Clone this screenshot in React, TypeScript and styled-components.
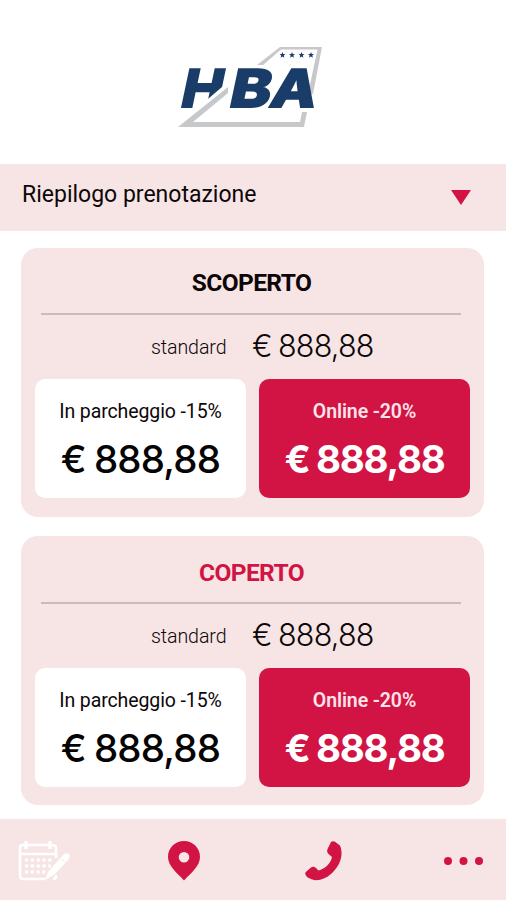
import React from 'react';
import styled, { createGlobalStyle } from 'styled-components';

const red = '#d11443';
const blush = '#f7e5e5';

const GlobalStyle = createGlobalStyle`
  * { box-sizing: border-box; }
  body { margin: 0; background: #fff; font-family: Roboto, "Noto Sans", sans-serif; color: #0d0709; }
  button { border: 0; padding: 0; background: none; font: inherit; color: inherit; }
`;

const Screen = styled.div`
  width: 506px;
  height: 900px;
  display: flex;
  flex-direction: column;
  overflow: hidden;
`;

const Header = styled.header`
  height: 164px;
  flex: none;
  padding: 40px 0 0 170px;
  svg { display: block; }
`;

const Summary = styled.button`
  height: 67px;
  flex: none;
  display: flex;
  justify-content: space-between;
  align-items: flex-start;
  padding: 15px 35px 0 22px;
  background: ${blush};
  svg { margin-top: 11px; }
`;

const SummaryText = styled.span`
  font-size: 23px;
  line-height: 31px;
  white-space: nowrap;
`;

const Cards = styled.main`
  flex: 1;
  display: flex;
  flex-direction: column;
  gap: 19px;
  padding: 17px 22px 0 21px;
`;

const Card = styled.section`
  height: 269px;
  padding: 0 14px;
  border-radius: 17px;
  background: ${blush};
`;

const Title = styled.h2<{ $accent?: boolean }>`
  margin: 0 9px 0 6px;
  height: ${(p) => (p.$accent ? 68 : 67)}px;
  padding: ${(p) => (p.$accent ? 22 : 20)}px 0 0 1px;
  border-bottom: 2px solid #cbb9bf;
  text-align: center;
  font-size: 24.5px;
  line-height: 30px;
  font-weight: 700;
  letter-spacing: -0.6px;
  color: ${(p) => (p.$accent ? red : '#0d0709')};
`;

const Standard = styled.div`
  height: 64px;
  display: flex;
  align-items: flex-start;
  padding: 12px 0 0 116px;
`;

const StandardLabel = styled.span`
  width: 101px;
  padding-top: 2px;
  font-size: 19.6px;
  line-height: 38px;
  font-weight: 300;
  letter-spacing: -0.1px;
`;

const Price = styled.span<{ $size: number; $weight: number; $spacing: number }>`
  font-family: Inter, "Noto Sans", sans-serif;
  font-size: ${(p) => p.$size}px;
  font-weight: ${(p) => p.$weight};
  letter-spacing: ${(p) => p.$spacing}px;
  word-spacing: -1.5px;
  line-height: 38px;
  white-space: nowrap;
`;

const Offers = styled.div`
  display: grid;
  grid-template-columns: 211px 211px;
  gap: 13px;
`;

const Offer = styled.button<{ $primary?: boolean }>`
  height: 119px;
  display: flex;
  flex-direction: column;
  align-items: center;
  padding-top: 18px;
  gap: 13px;
  border-radius: 10px;
  background: ${(p) => (p.$primary ? red : '#fff')};
  color: ${(p) => (p.$primary ? '#fff' : '#050304')};
`;

const OfferLabel = styled.span<{ $primary?: boolean }>`
  font-size: 19.5px;
  line-height: 29px;
  margin-bottom: 1px;
  letter-spacing: -0.1px;
  font-weight: ${(p) => (p.$primary ? 600 : 400)};
  color: ${(p) => (p.$primary ? '#ffe3ea' : '#0d0709')};
  white-space: nowrap;
`;

const TabBar = styled.nav`
  height: 81px;
  flex: none;
  display: grid;
  grid-template-columns: 150px 137px 139px 40px;
  align-items: center;
  padding: 3px 22px 0 18px;
  background: ${blush};
`;

const Tab = styled.button`
  display: flex;
`;

const LogoLetter = styled.text`
  font-family: Inter, sans-serif;
  font-weight: 800;
  font-size: 52px;
  fill: #193c68;
  stroke: #193c68;
  stroke-width: 1.8px;
`;

function Logo() {
  return (
    <svg width="160" height="92" viewBox="170 40 160 92" aria-label="HBA">
      <path d="M257 65 280 47H322L313 94H308L317.5 49.5H281L263 65Z" fill="#c7c8ca" />
      <LogoLetter transform="translate(179 106.8) skewX(-12)" textLength="41" lengthAdjust="spacingAndGlyphs">H</LogoLetter>
      <path d="M230 80 222 87 195 110H230Z" fill="#fff" />
      <path d="M228 87 178 127H304L307 112H302L300 122H193L228 93Z" fill="#c7c8ca" />
      <LogoLetter transform="translate(227.5 106.8) skewX(-12)" textLength="41" lengthAdjust="spacingAndGlyphs">B</LogoLetter>
      <LogoLetter transform="translate(268 106.8) skewX(-12)" textLength="46" lengthAdjust="spacingAndGlyphs">A</LogoLetter>
      {[282.5, 292, 301.5, 311].map((x) => (
        <path
          key={x}
          transform={`translate(${x} 55)`}
          d="M0-3 .8-.9 3-.8 1.3.6 1.9 2.7 0 1.5-1.9 2.7-1.3.6-3-.8-.8-.9Z"
          fill="#193c68"
        />
      ))}
    </svg>
  );
}

function CalendarIcon() {
  return (
    <svg width="53" height="42" viewBox="0 0 53 42" fill="none" stroke="#fff" strokeWidth="2.6">
      <path d="M27 39H5Q2 39 2 36V8Q2 5 5 5H34Q38 5 38 8V18M2 14H38M38 35V36Q38 39 35 39" />
      <path d="M8 1V9M32 1V9" strokeWidth="3.4" />
      <path d="M7 20H35M7 26H33M7 32H27" strokeDasharray="3.2 2.6" strokeWidth="3.2" />
      <path d="M27 40 30 32 45 15Q48 12 51 14Q53 16 50 20L36 35Z" fill="#fff" stroke="none" />
      <path d="m43 19 5 3" stroke={blush} strokeWidth=".7" />
    </svg>
  );
}

function PinIcon() {
  return (
    <svg width="32" height="40" viewBox="0 0 32 40">
      <path fillRule="evenodd" fill={red} d="M16 0C7 0 0 7 0 15.8 0 25 8 31 16 39.5 24 31 32 25 32 15.8 32 7 25 0 16 0Zm0 11a5.3 5.3 0 1 1 0 10.6A5.3 5.3 0 0 1 16 11Z" />
    </svg>
  );
}

function PhoneIcon() {
  return (
    <svg width="38" height="40" viewBox="0 0 38 40">
      <path fill={red} d="M26 1Q28-.5 30 .7L35 4.5C39 14 35 25 26 33 18 40 9 41 2 36Q-.8 33 .8 31L6 26.5Q8.5 25 11 27L13.5 29.5C20 28 26 22 27 16L23.5 13Q21.5 11 22.5 8Z" />
    </svg>
  );
}

function DotsIcon() {
  return (
    <svg width="40" height="8" viewBox="0 0 40 8" fill={red}>
      <circle cx="4" cy="4" r="4" />
      <circle cx="19.5" cy="4" r="4" />
      <circle cx="35" cy="4" r="4" />
    </svg>
  );
}

function ParkingCard({ title, accent }: { title: string; accent?: boolean }) {
  return (
    <Card>
      <Title $accent={accent}>{title}</Title>
      <Standard>
        <StandardLabel>standard</StandardLabel>
        <Price $size={30.5} $weight={350} $spacing={-0.8}>€ 888,88</Price>
      </Standard>
      <Offers>
        <Offer>
          <OfferLabel>In parcheggio -15%</OfferLabel>
          <Price $size={38.5} $weight={500} $spacing={-0.8}>€ 888,88</Price>
        </Offer>
        <Offer $primary>
          <OfferLabel $primary>Online -20%</OfferLabel>
          <Price $size={38.5} $weight={700} $spacing={-1.3}>€ 888,88</Price>
        </Offer>
      </Offers>
    </Card>
  );
}

export default function App() {
  return (
    <>
      <GlobalStyle />
      <Screen>
        <Header><Logo /></Header>
        <Summary>
          <SummaryText>Riepilogo prenotazione</SummaryText>
          <svg width="20" height="15" viewBox="0 0 20 15"><path d="M0 0H20L10 15Z" fill={red} /></svg>
        </Summary>
        <Cards>
          <ParkingCard title="SCOPERTO" />
          <ParkingCard title="COPERTO" accent />
        </Cards>
        <TabBar>
          <Tab aria-label="Prenotazioni"><CalendarIcon /></Tab>
          <Tab aria-label="Mappa"><PinIcon /></Tab>
          <Tab aria-label="Telefono"><PhoneIcon /></Tab>
          <Tab aria-label="Altro"><DotsIcon /></Tab>
        </TabBar>
      </Screen>
    </>
  );
}
